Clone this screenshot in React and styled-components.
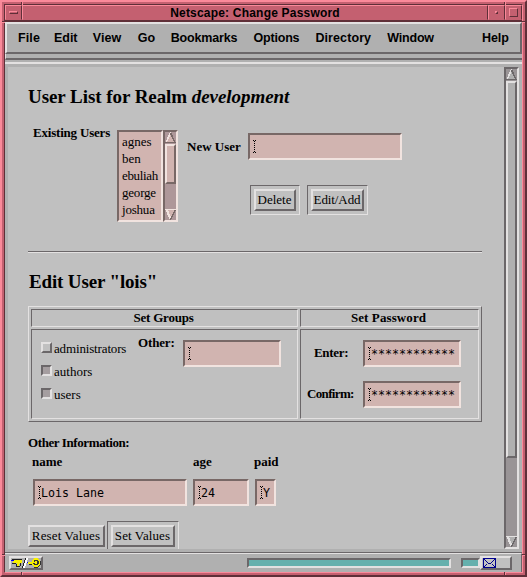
import React from "react";
import styled, { createGlobalStyle, css } from "styled-components";

const c = {
  grey: "#b0b0b0", page: "#c0c0c0", light: "#e3e1e1", dark: "#6b6769",
  pinkLight: "#fa8a9a", pink: "#c46070", pinkDark: "#5f2f38",
  field: "#d1b4b0", fieldDark: "#786866", fieldLight: "#f1e3df",
  teal: "#66b0ad", trough: "#999496", fieldTrough: "#ae9799",
};
const Global = createGlobalStyle`
  *{box-sizing:border-box} body{margin:0;overflow:hidden}
`;
const raised = css`border:2px solid;border-color:${c.light} ${c.dark} ${c.dark} ${c.light};`;
const sunken = css`border:2px solid;border-color:${c.dark} ${c.light} ${c.light} ${c.dark};`;

const Frame = styled.div`
  position:relative;width:527px;height:577px;background:${c.pink};overflow:hidden;
  border:2px solid;border-color:${c.pinkLight} ${c.pinkDark} ${c.pinkDark} ${c.pinkLight};
  font-family:"Liberation Serif",serif;color:#000;
`;
const Inner = styled.div`
  margin:2px;width:519px;height:569px;display:flex;flex-direction:column;
  border:1px solid;border-color:${c.pinkDark} ${c.pinkLight} ${c.pinkLight} ${c.pinkDark};
`;
const TitleBar = styled.div`
  height:17px;display:flex;flex:none;border-bottom:2px solid ${c.pinkDark};
  font:bold 12px/15px "Liberation Sans",sans-serif;
`;
const TitleCell = styled.div`
  width:${p => p.$w}px;height:15px;display:flex;align-items:center;justify-content:center;
  border:1px solid;border-color:${c.pinkLight} ${c.pinkDark} ${c.pink} ${c.pinkLight};
`;
const Glyph = styled.i`
  width:${p => p.$w}px;height:${p => p.$h}px;border:1px solid;
  border-color:${c.pinkLight} ${c.pinkDark} ${c.pinkDark} ${c.pinkLight};
`;
const Text = styled.span`white-space:pre;letter-spacing:${p => p.$ls || 0}px;padding-top:1px;`;
const MenuBar = styled.div`
  height:32px;flex:none;background:${c.grey};display:flex;padding:7px 8px 0 11px;${raised}
  font:bold 12.5px/15px "Liberation Sans",sans-serif;
`;
const MenuItem = styled.span`width:${p => p.$w}px;white-space:pre;letter-spacing:${p => p.$ls || 0}px;`;
const Strip = styled.div`
  height:6px;flex:none;background:${c.grey};border-bottom:2px solid ${c.dark};border-left:1px solid ${c.light};
`;
const Main = styled.div`
  height:493px;flex:none;background:${c.grey};padding-top:2px;border-bottom:1px solid ${c.dark};
`;
const MainEdge = styled.div`
  height:489px;border-top:2px solid ${c.light};padding:3px 0 0 3px;display:flex;
`;
const Page = styled.main`width:496px;height:482px;background:${c.page};padding:18px 0 0 20px;overflow:hidden;`;
const ScrollBar = styled.div`
  width:15px;height:${p => p.$h}px;flex:none;border:2px solid;
  border-color:${p => p.$field ? `${c.fieldDark} ${c.fieldLight} ${c.fieldLight} ${c.fieldDark}` : `${c.dark} ${c.light} ${c.light} ${c.dark}`};
  background:${p => p.$field ? c.fieldTrough : c.trough};
  display:flex;flex-direction:column;
`;
const Thumb = styled.div`
  height:${p => p.$h}px;margin:1px 0 auto;border:2px solid;
  background:${p => p.$field ? c.field : c.grey};
  border-color:${p => p.$field ? `${c.fieldLight} ${c.fieldDark} ${c.fieldDark} ${c.fieldLight}` : `${c.light} ${c.dark} ${c.dark} ${c.light}`};
`;
const Svg = styled.svg`display:block;flex:none;`;

function Arrow({ down, field }) {
  const l = field ? c.fieldLight : c.light, d = field ? c.fieldDark : c.dark, f = field ? c.field : c.grey;
  return (
    <Svg width="11" height="11" viewBox="0 0 11 11" shapeRendering="crispEdges">
      {down ? <>
        <path d="M0 0H11L5.5 11Z" fill={f} /><path d="M0 0H11V1H3L6 8V11H5Z" fill={l} /><path d="M11 1L6 11H5V10L9.5 1Z" fill={d} />
      </> : <>
        <path d="M5.5 0L11 11H0Z" fill={f} /><path d="M5 0H6V2L2 10L0 11Z" fill={l} /><path d="M6 0L11 11H0V10H9L5 2Z" fill={d} />
      </>}
    </Svg>
  );
}

const Heading = styled.h2`margin:0;height:${p => p.$h}px;font-size:19px;line-height:24px;white-space:pre;letter-spacing:${p => p.$ls}px;padding-left:${p => p.$pad || 0}px;`;
const UserRow = styled.section`display:flex;height:126px;padding-left:5px;`;
const Label = styled.b`
  display:block;flex:none;width:${p => p.$w}px;font-size:13px;line-height:16px;white-space:pre;
  letter-spacing:${p => p.$ls || 0}px;margin-top:${p => p.$top || 0}px;padding-left:${p => p.$pad || 0}px;
`;
const UserList = styled.div`
  margin-top:5px;width:46px;height:92px;flex:none;background:${c.field};padding:1px 0 0 3px;border:2px solid;
  border-color:${c.fieldDark} ${c.fieldLight} ${c.fieldLight} ${c.fieldDark};
`;
const Option = styled.div`height:17px;font-size:13px;line-height:18px;white-space:nowrap;letter-spacing:${p => p.$ls || 0}px;`;
const ListScroll = styled.div`margin:5px 9px 0 0;`;
const NewUser = styled.div`display:flex;flex-direction:column;gap:25px;padding-top:8px;`;
const Buttons = styled.div`display:flex;gap:7px;margin-left:2px;`;
const Field = styled.div`
  width:${p => p.$w}px;height:27px;flex:none;background:${c.field};border:2px solid;display:flex;align-items:center;padding-left:3px;
  border-color:${c.fieldDark} ${c.fieldLight} ${c.fieldLight} ${c.fieldDark};
  font:11.63px/16px "DejaVu Sans Mono",monospace;white-space:pre;
`;
function Caret() {
  return <Svg width="3" height="13" viewBox="0 0 3 13" shapeRendering="crispEdges">
    <path d="M0 .5H1M2 .5H3M0 12.5H1M2 12.5H3M1 1.5H2M1 3.5H2M1 5.5H2M1 7.5H2M1 9.5H2M1 11.5H2" stroke="#000" />
  </Svg>;
}
const Input = ({ w, children }) => <Field $w={w}><Caret />{children}</Field>;
const Outline = styled.div`padding:3px;border:1px solid;border-color:${c.dark} ${c.light} ${c.light} ${c.dark};height:30px;`;
const Button = styled.button`
  display:flex;align-items:center;justify-content:center;width:${p => p.$w}px;height:22px;background:${c.page};padding:0 1px 1px 0;${raised}
  font:13px/16px "Liberation Serif",serif;letter-spacing:${p => p.$ls || 0}px;white-space:nowrap;color:#000;
`;
const Rule = styled.div`width:454px;height:2px;border-top:1px solid ${c.dark};border-bottom:1px solid ${c.light};margin-bottom:17px;`;
const Table = styled.section`
  width:454px;height:116px;display:grid;grid-template:18px 90px / 267px 179px;gap:2px;padding:2px;
  border:1px solid;border-color:${c.light} ${c.dark} ${c.dark} ${c.light};
`;
const Cell = styled.div`
  display:flex;border:1px solid;border-color:${c.dark} ${c.light} ${c.light} ${c.dark};
`;
const HeadCell = styled(Cell)`justify-content:center;font:bold 13px/16px "Liberation Serif",serif;letter-spacing:${p => p.$ls}px;padding-right:2px;`;
const Checks = styled.div`width:97px;padding:12px 0 0 9px;display:flex;flex-direction:column;gap:12px;`;
const Check = styled.div`
  height:11px;display:flex;gap:2px;font-size:13px;line-height:14px;white-space:nowrap;letter-spacing:${p => p.$ls || 0}px;
`;
const Box = styled.i`
  width:11px;height:11px;flex:none;background:${p => p.$on ? "#a59ea0" : c.page};${p => p.$on ? sunken : raised}
`;
const GroupField = styled.div`padding-top:10px;`;
const Passwords = styled.div`display:flex;flex-direction:column;gap:14px;padding:10px 0 0 6px;`;
const PassRow = styled.div`display:flex;`;
const Row = styled.div`display:flex;padding-left:${p => p.$pad || 0}px;gap:${p => p.$gap || 0}px;height:${p => p.$h}px;`;
const ResetWrap = styled.div`padding-top:4px;margin-right:2px;`;
const StatusBar = styled.footer`
  height:19px;flex:none;background:${c.grey};display:flex;border-top:1px solid ${c.light};border-right:1px solid ${c.dark};padding:2px 4px 0 4px;
`;
const IconButton = styled.div`width:${p => p.$w}px;height:14px;background:${p => p.$mail ? c.page : c.grey};${raised}display:flex;align-items:center;padding-left:${p => p.$mail ? 1 : 0}px;`;
const Meter = styled.div`width:${p => p.$w}px;height:10px;margin:2px 0 0 ${p => p.$left}px;background:${c.teal};${sunken}`;
const Notch = styled.i`
  position:absolute;left:${p => p.$x}px;top:${p => p.$y}px;
  width:${p => p.$v ? 2 : 5}px;height:${p => p.$v ? 5 : 2}px;
  ${p => p.$v ? `border-left:1px solid ${c.pinkDark};border-right:1px solid ${c.pinkLight};` : `border-top:1px solid ${c.pinkDark};border-bottom:1px solid ${c.pinkLight};`}
`;

function Key() {
  return <Svg width="30" height="10" viewBox="0 0 30 10" shapeRendering="crispEdges">
    <path d="M1 1H11V2H1ZM1 5H5V6H1ZM5 6H6V8H5ZM9 5H10V8H9ZM5 8H9V9H5Z" fill="#222" />
    <path d="M2 2H11V5H9V6H8V8H6V5H2Z" fill="#f8f000" />
    <path d="M0 2H3V3H0Z" fill="#00f" />
    <path d="M14 10V8H15V5H16V2H17V0H15V2H14V5H13V8H12V10Z" fill="#fff" />
    <path d="M11 10H12V8H13V5H14V2H15V0H14V2H13V5H12V8H11Z" fill="#222" />
    <path d="M16 4H17V5H16Z" fill="#00f" />
    <path d="M17 4H21V6H17Z" fill="#f8f000" />
    <path d="M18 6H21V7H18Z" fill="#222" />
    <path d="M21 2H22V1H23V0H27V1H28V2H29V7H28V8H27V9H23V8H22V7H21Z" fill="#f8f000" />
    <path d="M23 2H27V3H28V6H27V7H23V6H22V5H25V4H23ZM23 9H27V10H23ZM27 8H28V9H27ZM28 7H29V8H28ZM29 3H30V7H29Z" fill="#333" />
    <path d="M24 3H26V6H24Z" fill="#f8f000" /><path d="M22 4H25V5H22Z" fill="#f8f000" />
  </Svg>;
}
function Mail() {
  return <Svg width="13" height="10" viewBox="0 0 13 10" shapeRendering="crispEdges">
    <rect x=".5" y=".5" width="12" height="9" fill="#c4c4c4" stroke="#00008c" />
    <path d="M1 1.5H2M2 2.5H3M3 3.5H4M4 4.5H5M5 5.5H8M8 4.5H9M9 3.5H10M10 2.5H11M11 1.5H12M3 6.5H4M2 7.5H3M1 8.5H2M9 6.5H10M10 7.5H11M11 8.5H12" stroke="#00008c" />
  </Svg>;
}

const menus = [["File", 36, .1], ["Edit", 39, 0], ["View", 45, 0], ["Go", 33, 0], ["Bookmarks", 83, -.15], ["Options", 62, -.2], ["Directory", 72, .1], ["Window", 95, -.2], ["Help", 30, -.1]];
const users = [["agnes", 0], ["ben", 0], ["ebuliah", -.35], ["george", -.2], ["joshua", -.2]];

export default function App() {
  return (
    <Frame>
      <Global />
      <Inner>
        <TitleBar>
          <TitleCell $w={17}><Glyph $w={9} $h={3} /></TitleCell>
          <TitleCell $w={466}><Text $ls={.2}>Netscape: Change Password</Text></TitleCell>
          <TitleCell $w={17}><Glyph $w={3} $h={3} /></TitleCell>
          <TitleCell $w={17}><Glyph $w={9} $h={9} /></TitleCell>
        </TitleBar>
        <MenuBar>{menus.map(([t, w, ls]) => <MenuItem key={t} $w={w} $ls={ls}>{t}</MenuItem>)}</MenuBar>
        <Strip />
        <Main>
          <MainEdge>
            <Page>
              <Heading $h={40} $ls={-.06}>User List for Realm <em>development</em></Heading>
              <UserRow>
                <Label $w={84} $ls={-.2}>Existing Users</Label>
                <UserList>
                  {users.map(([n, ls]) => <Option key={n} $ls={ls}>{n}</Option>)}
                </UserList>
                <ListScroll><ScrollBar $h={92} $field><Arrow field /><Thumb $h={40} $field /><Arrow down field /></ScrollBar></ListScroll>
                <Label $w={61} $top={14}>New User</Label>
                <NewUser>
                  <Input w={154} />
                  <Buttons>
                    <Outline><Button $w={42}>Delete</Button></Outline>
                    <Outline><Button $w={53} $ls={-.1}>Edit/Add</Button></Outline>
                  </Buttons>
                </NewUser>
              </UserRow>
              <Rule />
              <Heading $h={36} $ls={-.15} $pad={1}>Edit User "lois"</Heading>
              <Table>
                <HeadCell $ls={-.2}>Set Groups</HeadCell>
                <HeadCell $ls={.1}>Set Password</HeadCell>
                <Cell>
                  <Checks>
                    <Check $ls={-.15}><Box />administrators</Check>
                    <Check><Box $on />authors</Check>
                    <Check><Box $on />users</Check>
                  </Checks>
                  <Label $top={5} $w={54} $pad={9} $ls={-.15}>Other:</Label>
                  <GroupField><Input w={98} /></GroupField>
                </Cell>
                <Cell>
                  <Passwords>
                    <PassRow><Label $top={5} $w={56} $pad={7} $ls={-.3}>Enter:</Label><Input w={98}>************</Input></PassRow>
                    <PassRow><Label $top={5} $w={56} $ls={-.65}>Confirm:</Label><Input w={98}>************</Input></PassRow>
                  </Passwords>
                </Cell>
              </Table>
              <Row $h={32} ><Label $top={13} $w={200} $ls={-.4}>Other Information:</Label></Row>
              <Row $h={25} $pad={4}><Label $w={161}>name</Label><Label $w={61}>age</Label><Label $w={40}>paid</Label></Row>
              <Row $h={42} $pad={5} $gap={6}><Input w={154}>Lois Lane</Input><Input w={56}>24</Input><Input w={21}>Y</Input></Row>
              <Row $h={30}>
                <ResetWrap><Button $w={77} $ls={.15}>Reset Values</Button></ResetWrap>
                <Outline><Button $w={64} $ls={.1}>Set Values</Button></Outline>
              </Row>
            </Page>
            <ScrollBar $h={482}><Arrow /><Thumb $h={377} /><Arrow down /></ScrollBar>
          </MainEdge>
        </Main>
        <StatusBar>
          <IconButton $w={34}><Key /></IconButton>
          <Meter $w={204} $left={204} />
          <Meter $w={19} $left={10} />
          <IconButton $w={32} $mail><Mail /></IconButton>
        </StatusBar>
      </Inner>
      <Notch $v $x={19} $y={-2} /><Notch $v $x={502} $y={-2} />
      <Notch $v $x={19} $y={570} /><Notch $v $x={502} $y={570} />
      <Notch $x={-2} $y={19} /><Notch $x={520} $y={19} />
      <Notch $x={-2} $y={552} /><Notch $x={520} $y={552} />
    </Frame>
  );
}
